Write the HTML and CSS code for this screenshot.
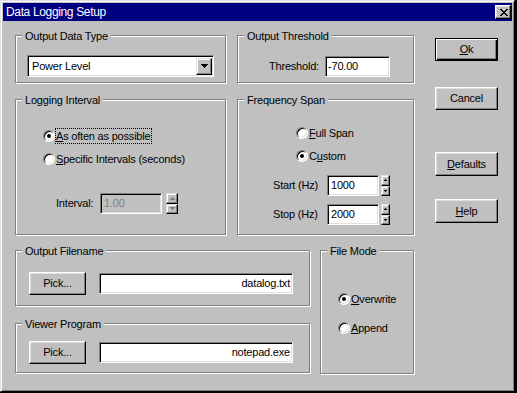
FILE: index.html
```html
<!DOCTYPE html>
<html>
<head>
<meta charset="utf-8">
<title>Data Logging Setup</title>
<link rel="stylesheet" href="styles.css">
</head>
<body>
<div class="window">
  <div class="titlebar">
    <span class="title">Data Logging Setup</span>
    <span class="close-btn">
      <svg width="8" height="7" viewBox="0 0 8 7" shape-rendering="crispEdges">
        <rect x="0" y="0" width="2" height="1"/><rect x="6" y="0" width="2" height="1"/>
        <rect x="1" y="1" width="2" height="1"/><rect x="5" y="1" width="2" height="1"/>
        <rect x="2" y="2" width="4" height="1"/>
        <rect x="3" y="3" width="2" height="1"/>
        <rect x="2" y="4" width="4" height="1"/>
        <rect x="1" y="5" width="2" height="1"/><rect x="5" y="5" width="2" height="1"/>
        <rect x="0" y="6" width="2" height="1"/><rect x="6" y="6" width="2" height="1"/>
      </svg>
    </span>
  </div>
  <div class="client">
    <div class="main">
      <div class="top-grid">
        <div class="group">
          <div class="gtitle">Output Data Type</div>
          <div class="combo">
            <span class="combo-text">Power Level</span>
            <span class="combo-btn">
              <svg width="7" height="4" viewBox="0 0 7 4" shape-rendering="crispEdges">
                <rect x="0" y="0" width="7" height="1"/><rect x="1" y="1" width="5" height="1"/>
                <rect x="2" y="2" width="3" height="1"/><rect x="3" y="3" width="1" height="1"/>
              </svg>
            </span>
          </div>
        </div>
        <div class="group">
          <div class="gtitle">Output Threshold</div>
          <div class="field-row thresh-row">
            <span class="lbl lbl-thresh">Threshold:</span>
            <span class="edit edit-thresh">-70.00</span>
          </div>
        </div>
        <div class="group">
          <div class="gtitle">Logging Interval</div>
          <div class="radio-row li-first">
            <span class="radio checked"></span>
            <span class="rlabel focus"><u>A</u>s often as possible</span>
          </div>
          <div class="radio-row li-second">
            <span class="radio"></span>
            <span class="rlabel"><u>S</u>pecific Intervals (seconds)</span>
          </div>
          <div class="field-row interval-row">
            <span class="lbl lbl-interval">Interval:</span>
            <span class="edit edit-interval disabled">1.00</span>
            <span class="spin spin-wide disabled">
              <span class="spin-half"><svg width="5" height="3" viewBox="0 0 5 3" shape-rendering="crispEdges"><rect x="2" y="0" width="1" height="1"/><rect x="1" y="1" width="3" height="1"/><rect x="0" y="2" width="5" height="1"/></svg></span>
              <span class="spin-half"><svg width="5" height="3" viewBox="0 0 5 3" shape-rendering="crispEdges"><rect x="0" y="0" width="5" height="1"/><rect x="1" y="1" width="3" height="1"/><rect x="2" y="2" width="1" height="1"/></svg></span>
            </span>
          </div>
        </div>
        <div class="group">
          <div class="gtitle">Frequency Span</div>
          <div class="radio-row fs-first">
            <span class="radio"></span>
            <span class="rlabel"><u>F</u>ull Span</span>
          </div>
          <div class="radio-row fs-second">
            <span class="radio checked"></span>
            <span class="rlabel">C<u>u</u>stom</span>
          </div>
          <div class="field-row start-row">
            <span class="lbl lbl-hz">Start (Hz)</span>
            <span class="edit edit-hz">1000</span>
            <span class="spin spin-narrow">
              <span class="spin-half"><svg width="3" height="2" viewBox="0 0 3 2" shape-rendering="crispEdges"><rect x="1" y="0" width="1" height="1"/><rect x="0" y="1" width="3" height="1"/></svg></span>
              <span class="spin-half"><svg width="3" height="2" viewBox="0 0 3 2" shape-rendering="crispEdges"><rect x="0" y="0" width="3" height="1"/><rect x="1" y="1" width="1" height="1"/></svg></span>
            </span>
          </div>
          <div class="field-row stop-row">
            <span class="lbl lbl-hz">Stop (Hz)</span>
            <span class="edit edit-hz">2000</span>
            <span class="spin spin-narrow">
              <span class="spin-half"><svg width="3" height="2" viewBox="0 0 3 2" shape-rendering="crispEdges"><rect x="1" y="0" width="1" height="1"/><rect x="0" y="1" width="3" height="1"/></svg></span>
              <span class="spin-half"><svg width="3" height="2" viewBox="0 0 3 2" shape-rendering="crispEdges"><rect x="0" y="0" width="3" height="1"/><rect x="1" y="1" width="1" height="1"/></svg></span>
            </span>
          </div>
        </div>
      </div>
      <div class="bottom-grid">
        <div class="bottom-left">
          <div class="group g-file">
            <div class="gtitle">Output Filename</div>
            <div class="field-row pick-row file-row">
              <span class="btn btn-pick">Pick...</span>
              <span class="edit edit-path">datalog.txt</span>
            </div>
          </div>
          <div class="group g-viewer">
            <div class="gtitle">Viewer Program</div>
            <div class="field-row pick-row viewer-row">
              <span class="btn btn-pick">Pick...</span>
              <span class="edit edit-path">notepad.exe</span>
            </div>
          </div>
        </div>
        <div class="group g-mode">
          <div class="gtitle">File Mode</div>
          <div class="radio-row fm-first">
            <span class="radio checked"></span>
            <span class="rlabel"><u>O</u>verwrite</span>
          </div>
          <div class="radio-row fm-second">
            <span class="radio"></span>
            <span class="rlabel"><u>A</u>ppend</span>
          </div>
        </div>
      </div>
    </div>
    <div class="buttons">
      <span class="btn btn-default btn-ok"><span><u>O</u>k</span></span>
      <span class="btn btn-cancel">Cancel</span>
      <span class="btn btn-defaults"><span><u>D</u>efaults</span></span>
      <span class="btn btn-help"><span><u>H</u>elp</span></span>
    </div>
  </div>
</div>
</body>
</html>
```

FILE: styles.css
```css
html, body {
  margin: 0;
  padding: 0;
}
body {
  background: #000;
  font-family: "Liberation Sans", Arial, sans-serif;
  font-size: 11px;
  letter-spacing: -0.2px;
  color: #000;
}
.window {
  width: 515px;
  height: 392px;
  box-sizing: border-box;
  background: #c0c0c0;
  border: 1px solid;
  border-color: #dfdfdf #000 #000 #dfdfdf;
  box-shadow: inset 1px 1px #fff, inset -1px -1px #808080;
  padding: 2px;
  display: flex;
  flex-direction: column;
}
.titlebar {
  height: 18px;
  flex: none;
  background: #000080;
  color: #fff;
  display: flex;
  align-items: center;
  justify-content: space-between;
  padding: 0 1px 0 3px;
}
.title {
  font-size: 12px;
  letter-spacing: -0.35px;
}
.close-btn {
  width: 16px;
  height: 14px;
  box-sizing: border-box;
  background: #c0c0c0;
  border: 1px solid;
  border-color: #fff #000 #000 #fff;
  box-shadow: inset -1px -1px #808080, inset 1px 1px #dfdfdf;
  display: flex;
  align-items: center;
  justify-content: center;
  padding-left: 1px;
}
.close-btn svg { display: block; fill: #000; }

.client {
  flex: 1;
  display: flex;
  padding: 14px 0 0 12px;
}
.main { width: 399px; flex: none; }
.top-grid {
  display: grid;
  grid-template-columns: 211px 177px;
  grid-template-rows: 48px 136px;
  column-gap: 11px;
  row-gap: 16px;
}
.bottom-grid {
  display: grid;
  grid-template-columns: 295px 94px;
  column-gap: 10px;
  margin-top: 15px;
  align-items: start;
}
.bottom-left {
  display: flex;
  flex-direction: column;
  gap: 17px;
}
.g-file { height: 56px; }
.g-viewer { height: 50px; }
.g-mode { height: 124px; }

.group {
  box-sizing: border-box;
  border: 1px solid #808080;
  box-shadow: inset 1px 1px #fff, 1px 1px #fff;
}
.gtitle {
  margin: -6px 0 0 6px;
  padding: 0 3px;
  width: fit-content;
  line-height: 13px;
  background: #c0c0c0;
}

/* combo box */
.combo {
  margin: 12px 0 0 11px;
  width: 187px;
  height: 22px;
  box-sizing: border-box;
  border: 1px solid;
  border-color: #808080 #fff #fff #808080;
  box-shadow: inset 1px 1px #000, inset -1px -1px #dfdfdf;
  background: #fff;
  display: flex;
  align-items: center;
  padding: 0 1px 0 4px;
}
.combo-text { flex: 1; line-height: 13px; }
.combo-btn {
  width: 16px;
  height: 17px;
  box-sizing: border-box;
  background: #c0c0c0;
  border: 1px solid;
  border-color: #dfdfdf #000 #000 #dfdfdf;
  box-shadow: inset -1px -1px #808080, inset 1px 1px #fff;
  display: flex;
  align-items: center;
  justify-content: center;
}
.combo-btn svg { display: block; fill: #000; }

/* rows */
.field-row {
  display: flex;
  align-items: center;
}
.lbl { line-height: 13px; }
.edit {
  box-sizing: border-box;
  height: 21px;
  border: 1px solid;
  border-color: #808080 #fff #fff #808080;
  box-shadow: inset 1px 1px #000, inset -1px -1px #dfdfdf;
  background: #fff;
  display: flex;
  align-items: center;
  padding: 0 2px 0 3px;
  line-height: 13px;
}
.edit.disabled {
  background: #c0c0c0;
  color: #808080;
}

.thresh-row { margin: 13px 0 0 31px; }
.lbl-thresh { width: 56px; }
.edit-thresh { width: 65px; padding-left: 2px; }

.interval-row { margin: 26px 0 0 40px; }
.lbl-interval { width: 44px; }
.edit-interval { width: 62px; }

.start-row { margin: 11px 0 0 35px; }
.stop-row { margin: 8px 0 0 35px; }
.lbl-hz { width: 54px; }
.edit-hz { width: 52px; }

.spin {
  display: flex;
  flex-direction: column;
  height: 21px;
}
.spin-wide { width: 12px; margin-left: 4px; }
.spin-narrow { width: 9px; margin-left: 2px; }
.spin-half {
  flex: 1;
  box-sizing: border-box;
  background: #c0c0c0;
  border: 1px solid;
  border-color: #dfdfdf #000 #000 #dfdfdf;
  box-shadow: inset -1px -1px #808080, inset 1px 1px #fff;
  display: flex;
  align-items: center;
  justify-content: center;
}
.spin-half svg { display: block; fill: #000; }
.spin.disabled .spin-half svg { fill: #808080; }

/* radios */
.radio-row {
  display: flex;
  align-items: center;
  height: 16px;
}
.li-first { margin: 21px 0 0 27px; }
.li-second { margin: 7px 0 0 27px; }
.fs-first { margin: 18px 0 0 58px; }
.fs-second { margin: 7px 0 0 58px; }
.fm-first { margin: 33px 0 0 17px; }
.fm-second { margin: 13px 0 0 17px; }

.radio {
  position: relative;
  width: 12px;
  height: 12px;
  box-sizing: border-box;
  border-radius: 50%;
  border: 1px solid;
  border-color: #808080 #fff #fff #808080;
  box-shadow: inset 1px 1px #000, inset -1px -1px #dfdfdf;
  background: #fff;
  flex: none;
}
.radio.checked::after {
  content: "";
  position: absolute;
  left: 3px;
  top: 3px;
  width: 4px;
  height: 4px;
  border-radius: 50%;
  background: #000;
}
.rlabel {
  line-height: 14px;
  border: 1px dotted transparent;
  padding: 0 1px 0 0;
  margin-left: 0;
}
.rlabel.focus { border-color: #000; }

/* buttons */
.btn {
  box-sizing: border-box;
  height: 23px;
  background: #c0c0c0;
  border: 1px solid;
  border-color: #fff #000 #000 #fff;
  box-shadow: inset -1px -1px #808080, inset 1px 1px #dfdfdf;
  display: flex;
  align-items: center;
  justify-content: center;
  line-height: 13px;
  flex: none;
}
.btn-default {
  border-color: #000;
  box-shadow: inset 1px 1px #fff, inset -1px -1px #000, inset -2px -2px #808080;
}
.btn-pick { width: 57px; }
.pick-row .edit-path { margin-left: 13px; }
.file-row { margin: 14px 0 0 13px; }
.viewer-row { margin: 10px 0 0 13px; }
.edit-path {
  width: 194px;
  justify-content: flex-end;
  padding-right: 2px;
}

.buttons {
  display: flex;
  flex-direction: column;
  width: 63px;
  margin-left: 21px;
  padding-top: 3px;
}
.buttons .btn { width: 63px; }
.btn-cancel { margin-top: 26px; }
.btn-defaults { margin-top: 42px; height: 24px; }
.btn-help { margin-top: 23px; height: 24px; }
```
